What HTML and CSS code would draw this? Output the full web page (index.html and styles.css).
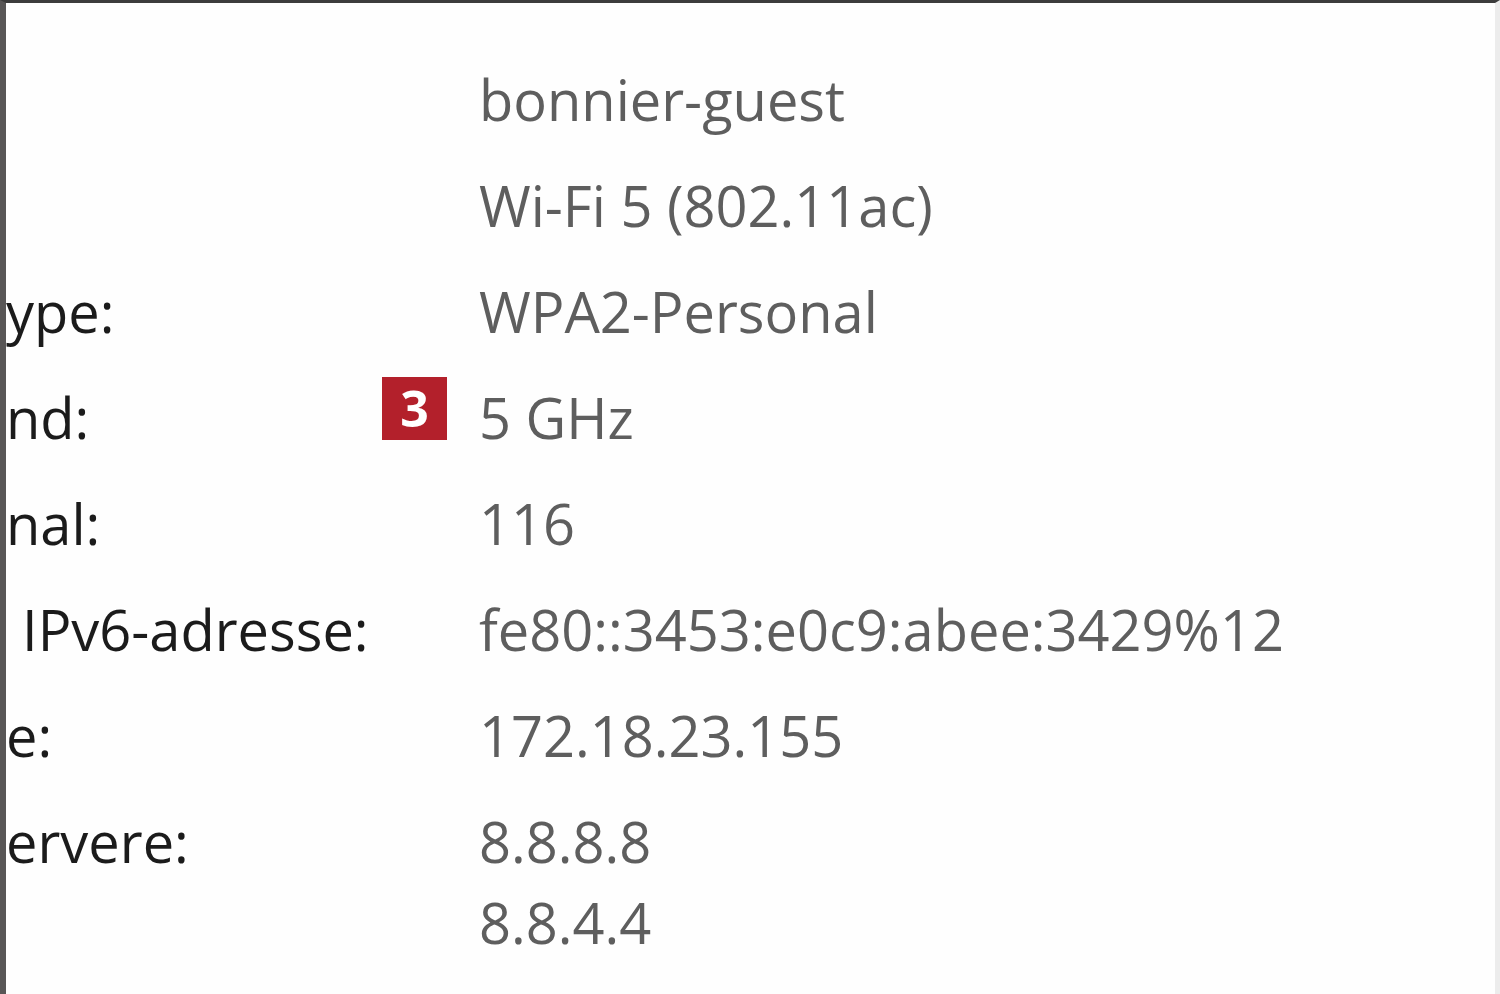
FILE: index.html
```html
<!DOCTYPE html>
<html lang="no">
<head>
<meta charset="utf-8">
<title>Egenskaper</title>
<link rel="stylesheet" href="styles.css">
</head>
<body>
<div class="window">
  <div class="pane">
    <dl class="props">
      <dt class="label"></dt>
      <dd class="value">bonnier-guest</dd>
      <dt class="label"></dt>
      <dd class="value">Wi-Fi 5 (802.11ac)</dd>
      <dt class="label">ype:</dt>
      <dd class="value">WPA2-Personal</dd>
      <dt class="label marked">nd:<span class="badge">3</span></dt>
      <dd class="value">5 GHz</dd>
      <dt class="label">nal:</dt>
      <dd class="value">116</dd>
      <dt class="label indent">IPv6-adresse:</dt>
      <dd class="value">fe80::3453:e0c9:abee:3429%12</dd>
      <dt class="label">e:</dt>
      <dd class="value">172.18.23.155</dd>
      <dt class="label">ervere:</dt>
      <dd class="value"><span class="line">8.8.8.8</span><span class="line">8.8.4.4</span></dd>
    </dl>
  </div>
</div>
</body>
</html>
```

FILE: styles.css
```css
html, body {
  margin: 0;
  padding: 0;
  background: #ffffff;
}

.window {
  width: 1500px;
  height: 994px;
  box-sizing: border-box;
  border-top: 3px solid #3c3c3c;
  border-left: 6px solid #585656;
  border-right: 5px solid #ececec;
  background: #fefefe;
  overflow: hidden;
  font-family: "Open Sans", "Noto Sans", "Liberation Sans", sans-serif;
  font-size: 56px;
  line-height: 81px;
}

.pane {
  padding-top: 56px;
}

.props {
  margin: 0;
  display: grid;
  grid-template-columns: 473px 1fr;
  row-gap: 25px;
}

.label {
  margin: 0;
  color: #1b1b1b;
  white-space: nowrap;
}

.indent {
  padding-left: 16px;
}

.marked {
  position: relative;
}

.value {
  margin: 0;
  color: #5e5e5e;
  white-space: nowrap;
}

.line {
  display: block;
}

.badge {
  position: absolute;
  top: 0;
  right: 32px;
  width: 65px;
  height: 63px;
  background: #b3202b;
  color: #ffffff;
  font-weight: 700;
  font-size: 50px;
  line-height: 63px;
  text-align: center;
}
```
